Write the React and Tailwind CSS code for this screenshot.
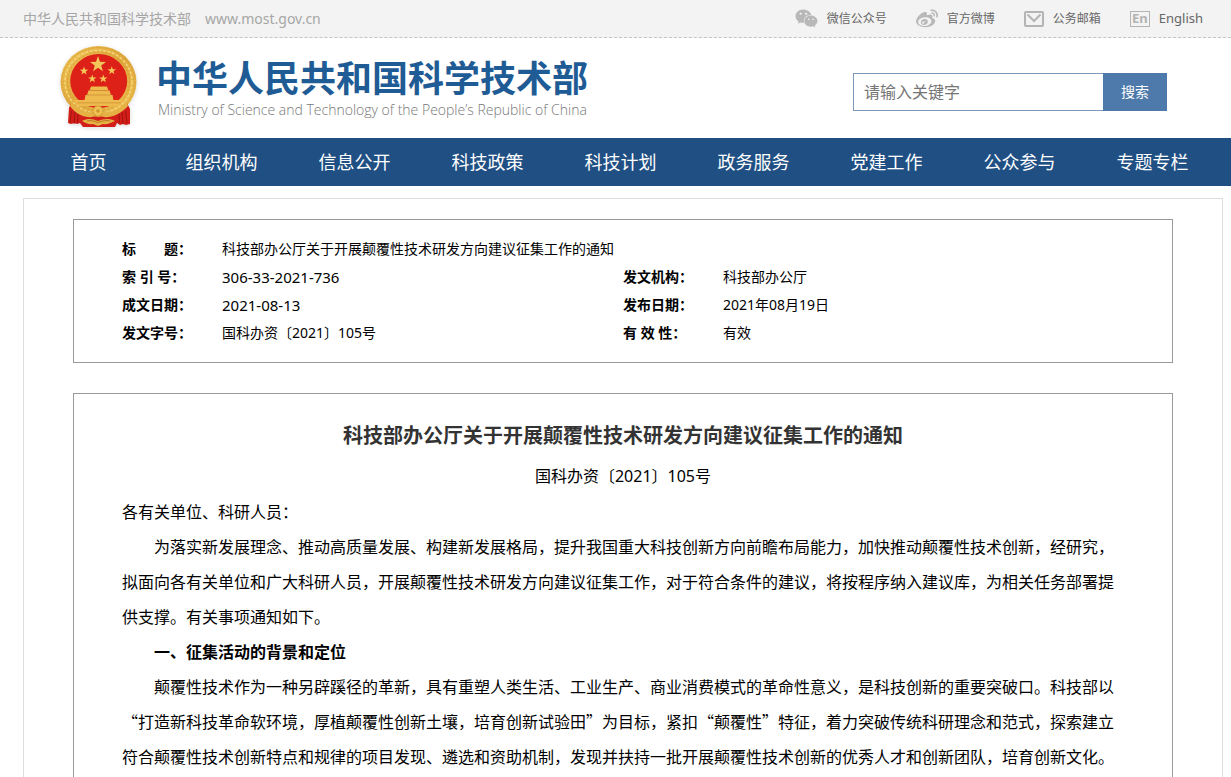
import { FaWeibo, FaWeixin } from 'react-icons/fa';

const navItems = [
  '首页',
  '组织机构',
  '信息公开',
  '科技政策',
  '科技计划',
  '政务服务',
  '党建工作',
  '公众参与',
  '专题专栏',
];

const paragraphs = [
  {
    text: '为落实新发展理念、推动高质量发展、构建新发展格局，提升我国重大科技创新方向前瞻布局能力，加快推动颠覆性技术创新，经研究，拟面向各有关单位和广大科研人员，开展颠覆性技术研发方向建议征集工作，对于符合条件的建议，将按程序纳入建议库，为相关任务部署提供支撑。有关事项通知如下。',
  },
  { text: '一、征集活动的背景和定位', heading: true },
  {
    text: '颠覆性技术作为一种另辟蹊径的革新，具有重塑人类生活、工业生产、商业消费模式的革命性意义，是科技创新的重要突破口。科技部以“打造新科技革命软环境，厚植颠覆性创新土壤，培育创新试验田”为目标，紧扣“颠覆性”特征，着力突破传统科研理念和范式，探索建立符合颠覆性技术创新特点和规律的项目发现、遴选和资助机制，发现并扶持一批开展颠覆性技术创新的优秀人才和创新团队，培育创新文化。',
  },
];

function starPoints(cx, cy, r) {
  return Array.from({ length: 10 }, (_, i) => {
    const radius = i % 2 === 0 ? r : r * 0.4;
    const angle = (Math.PI / 5) * i - Math.PI / 2;
    return `${cx + radius * Math.cos(angle)},${cy + radius * Math.sin(angle)}`;
  }).join(' ');
}

function Emblem() {
  return (
    <svg viewBox="8 6 82 86" className="h-[86px] w-[82px] shrink-0 drop-shadow-sm" role="img" aria-label="国徽">
      <defs>
        <linearGradient id="gold" x1="0" y1="0" x2="1" y2="1">
          <stop offset="0" stopColor="#f0c658" />
          <stop offset="0.5" stopColor="#dfa73c" />
          <stop offset="1" stopColor="#efc353" />
        </linearGradient>
      </defs>
      {/* Wheat wreath */}
      <ellipse cx="48.5" cy="43" rx="38" ry="36" fill="url(#gold)" />
      <ellipse cx="48.5" cy="43" rx="36.5" ry="34.5" fill="none" stroke="#d39a34" strokeWidth="1" strokeDasharray="1.5 1.5" />
      <ellipse cx="48.5" cy="42.7" rx="33.5" ry="31.5" fill="none" stroke="#f6d678" strokeWidth="1.5" strokeDasharray="3 1.5" />
      <ellipse cx="48.5" cy="42.5" rx="31" ry="29" fill="none" stroke="#cf9430" strokeWidth="0.8" strokeDasharray="2 2" />
      <ellipse cx="48.7" cy="42" rx="28.5" ry="27" fill="#dd2118" />
      {/* Stars */}
      <g fill="#f3c75a">
        <polygon points={starPoints(48, 25.5, 8.4)} />
        <polygon points={starPoints(34, 32, 4.4)} />
        <polygon points={starPoints(42.3, 39.8, 4.4)} />
        <polygon points={starPoints(53.3, 39.8, 4.4)} />
        <polygon points={starPoints(61.8, 31.6, 4.4)} />
      </g>
      {/* Gate */}
      <g fill="#eeb94d">
        <path d="M41 47.5h16l1.5 4h-19z" />
        <path d="M38.5 51.5h21l1.5 4.5h-24z" />
        <path d="M35.5 56h27l1 5.5h-29z" />
        <path d="M24 61h49.5l-3 6H27z" />
      </g>
      <path d="M40 51.5h17.5M37 56h24M27 63.8h43.5" stroke="#c58530" strokeWidth="0.6" />
      {/* Ribbons */}
      <path d="M21 64l9 8 6 4 12 2 13-2 7-4 9-8 3 6 0 15-4 1-3-1-3 1-3-2-2 4H33l-3-4-3 1-3-1-3 1-3-1 1-15z" fill="#d31d18" />
      <path d="M21.5 72L20 84M25 73l-1 12M28 75l-.5 9M75.5 72L77 84M72 73l1 12M69 75l.5 9" stroke="#9a1411" strokeWidth="0.9" fill="none" />
      <path d="M21 63c8 8 16 11 21 10l6 1 7-1c5 1 14-2 22-10l1 4c-8 9-18 12-24 11l-6-2-6 2c-6 1-16-2-22-11z" fill="#e5b044" />
      {/* Cogwheel */}
      <circle cx="48" cy="72" r="5" fill="#efc353" stroke="#cf9430" strokeWidth="1.2" strokeDasharray="1.5 1" />
      <circle cx="48" cy="72" r="1.8" fill="#cf9430" />
      <path d="M32 82c6-3 11-2 16 0 5-2 11-3 17 0-5 2-8 4-12 3l-5 2-5-2c-4 1-7-1-11-3z" fill="#e5b044" />
      <path d="M37 82c4-1 7 0 11 1.5 4-1.5 8-2.5 12-1.5" stroke="#b06a1c" strokeWidth="0.8" fill="none" />
    </svg>
  );
}

function MailIcon() {
  return (
    <svg viewBox="0 0 20 16" className="h-4 w-5" fill="none" stroke="#b4b4b4" strokeWidth="2" aria-hidden="true">
      <rect x="1" y="1" width="18" height="14" rx="1" />
      <path d="M3.5 3.5L10 10l6.5-6.5" />
    </svg>
  );
}

function EnIcon() {
  return (
    <span
      aria-hidden="true"
      className="flex h-4 w-5 items-center justify-center border border-[#b4b4b4] text-[13px] leading-none font-bold text-[#b4b4b4]"
    >
      En
    </span>
  );
}

const topLinks = [
  { label: '微信公众号', icon: <FaWeixin className="size-[23px] text-[#b8b8b8]" /> },
  { label: '官方微博', icon: <FaWeibo className="size-[22px] text-[#b8b8b8]" /> },
  { label: '公务邮箱', icon: <MailIcon /> },
  { label: 'English', icon: <EnIcon />, large: true },
];

function TopBar() {
  return (
    <div className="flex h-[38px] items-center justify-between border-b border-dashed border-[#c4c4c4] bg-[#f3f3f3] pr-7 pl-[23px]">
      <div className="flex gap-[14px] text-sm text-[#a6a6a6]">
        <span>中华人民共和国科学技术部</span>
        <span>www.most.gov.cn</span>
      </div>
      <div className="flex items-center gap-[29px]">
        {topLinks.map((link) => (
          <a key={link.label} href="#" className="flex items-center gap-[9px] text-[#666]">
            {link.icon}
            <span className={link.large ? 'text-[13px]' : 'text-xs'}>{link.label}</span>
          </a>
        ))}
      </div>
    </div>
  );
}

function Header() {
  return (
    <header className="flex h-[100px] items-center justify-between pr-16 pl-[58px]">
      <a href="#" className="flex items-center gap-4">
        <Emblem />
        <span className="flex flex-col">
          <span className="text-4xl leading-[44px] font-bold text-[#1f5c95]">中华人民共和国科学技术部</span>
          <span className="pl-0.5 font-['Open_Sans',sans-serif] text-sm leading-[18px] font-light text-[#777]">
            Ministry of Science and Technology of the People’s Republic of China
          </span>
        </span>
      </a>
      <form className="mt-2 flex h-[38px]" onSubmit={(e) => e.preventDefault()}>
        <input
          type="text"
          aria-label="搜索关键字"
          placeholder="请输入关键字"
          className="w-[250px] border border-r-0 border-[#7d98b8] bg-white px-[10px] text-base placeholder:text-[#757575] focus:outline-none"
        />
        <button type="submit" className="w-16 bg-[#4d79ab] text-sm text-white">
          搜索
        </button>
      </form>
    </header>
  );
}

function MetaItem({ label, children, wide }) {
  return (
    <div className={wide ? 'col-span-2 flex' : 'flex'}>
      <dt className="w-[100px] shrink-0 font-bold whitespace-pre">{label}</dt>
      <dd>{children}</dd>
    </div>
  );
}

export default function App() {
  return (
    <div
      lang="zh-CN"
      className="flex min-h-screen flex-col bg-white font-['Noto_Sans','Noto_Sans_CJK_SC',sans-serif] text-black"
    >
      <TopBar />
      <Header />

      <nav className="grid h-12 grid-cols-9 items-center bg-[#1f4f83] pr-3 pl-[22px] text-center text-lg text-white">
        {navItems.map((item) => (
          <a key={item} href="#">
            {item}
          </a>
        ))}
      </nav>

      <main className="mt-3 mr-2 ml-[23px] flex flex-1 flex-col border border-b-0 border-[#ddd] px-[49px] pt-5">
        {/* Document info */}
        <dl className="grid auto-rows-[28px] grid-cols-2 border border-[#999] px-12 py-[15px] text-sm leading-7">
          <MetaItem label={'标\u3000\u3000题：'} wide>
            科技部办公厅关于开展颠覆性技术研发方向建议征集工作的通知
          </MetaItem>
          <MetaItem label="索 引 号：">
            <span className="text-[15px]">306-33-2021-736</span>
          </MetaItem>
          <MetaItem label="发文机构：">科技部办公厅</MetaItem>
          <MetaItem label="成文日期：">
            <span className="text-[15px]">2021-08-13</span>
          </MetaItem>
          <MetaItem label="发布日期：">2021年08月19日</MetaItem>
          <MetaItem label="发文字号：">国科办资〔2021〕105号</MetaItem>
          <MetaItem label="有 效 性：">有效</MetaItem>
        </dl>

        {/* Notice */}
        <article className="mt-[30px] flex-1 border border-b-0 border-[#999] px-12 pt-6 text-base leading-[35px]">
          <h1 className="mb-[6px] h-[35px] text-center text-xl leading-[35px] font-bold text-[#333]">
            科技部办公厅关于开展颠覆性技术研发方向建议征集工作的通知
          </h1>
          <p className="h-[35px] text-center">国科办资〔2021〕105号</p>
          <div className="font-['Noto_Sans_CJK_SC',sans-serif]">
            <p>各有关单位、科研人员：</p>
            {paragraphs.map(({ text, heading }) => (
              <p key={text} className={heading ? 'indent-8 font-bold' : 'indent-8'}>
                {text}
              </p>
            ))}
          </div>
        </article>
      </main>
    </div>
  );
}
